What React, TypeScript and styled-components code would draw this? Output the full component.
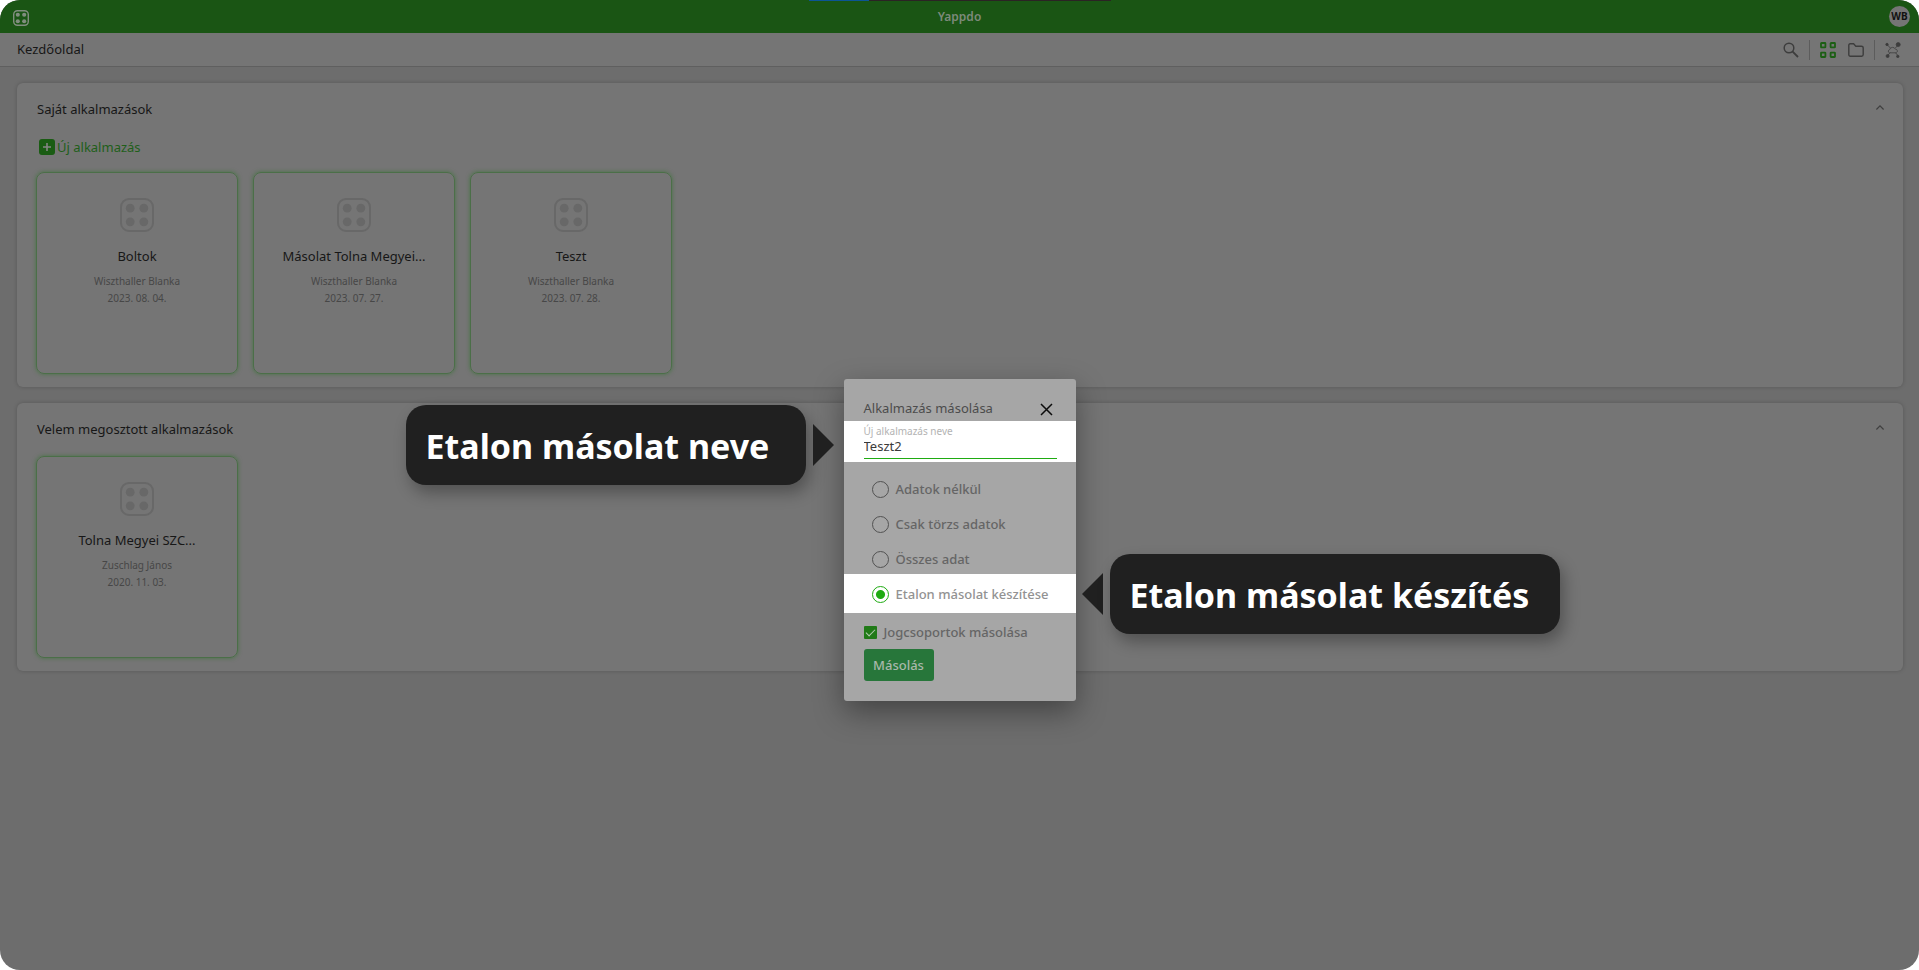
import React from 'react';
import styled, { createGlobalStyle } from 'styled-components';

const GlobalStyle = createGlobalStyle`
  *, *::before, *::after { box-sizing: border-box; }
  body { margin: 0; background: #fff; }
  body, button, input { font-family: "Noto Sans", "Open Sans", sans-serif; font-size: 13px; }
  h1, h2, h3, p, ul { margin: 0; padding: 0; font-weight: 400; font-size: 13px; }
  button { border: 0; padding: 0; background: none; cursor: pointer; }
  svg { display: block; }
`;

const Page = styled.div`
  position: relative;
  min-height: 100vh;
  overflow: hidden;
  border-radius: 20px;
  background: #6d6d6d;
  color: #171717;
`;

const LoadBar = styled.div`
  position: absolute;
  top: 0;
  left: calc(50% - 151px);
  width: 302px;
  height: 1px;
  background: #2b2324;
`;

const LoadValue = styled.div`
  width: 20%;
  height: 1px;
  background: #0c5596;
`;

const TopBar = styled.header`
  display: grid;
  grid-template-columns: 1fr auto 1fr;
  align-items: center;
  height: 33px;
  padding: 0 9px;
  background: #1a5514;
`;

const Brand = styled.h1`
  font-size: 12px;
  font-weight: 600;
  line-height: 20px;
  color: #7d8a7b;
`;

const HomeButton = styled.button`
  justify-self: start;
  padding: 2px 0 0 4px;
  color: #808d7e;
`;

const Avatar = styled.button`
  justify-self: end;
  width: 21px;
  height: 21px;
  border-radius: 50%;
  background: #757575;
  color: #111;
  font-size: 10px;
  font-weight: 700;
  line-height: 21px;
  text-align: center;
`;

const SubBar = styled.div`
  display: flex;
  align-items: center;
  justify-content: space-between;
  height: 34px;
  padding: 0 18px 0 17px;
  border-bottom: 1px solid #5f5f5f;
  background: #757575;
`;

const Crumb = styled.span`
  padding-bottom: 2px;
`;

const Tools = styled.div`
  display: flex;
  align-items: center;
  gap: 12px;
`;

const ToolButton = styled.button<{ $active?: boolean }>`
  color: ${p => (p.$active ? '#1c5f14' : '#3d3d3d')};
`;

const Divider = styled.span`
  width: 1px;
  height: 20px;
  margin: 0 -2px;
  background: #5c5c5c;
`;

const Content = styled.main`
  display: flex;
  flex-direction: column;
  gap: 16px;
  padding: 16px 16px 16px 17px;
`;

const Panel = styled.section`
  padding: 17px 19px 13px;
  border-radius: 6px;
  background: #757575;
  box-shadow: 0 0 4px rgba(0, 0, 0, 0.2);
`;

const PanelHead = styled.div`
  display: flex;
  align-items: flex-start;
  justify-content: space-between;
  height: 20px;
  margin-bottom: 16px;
`;

const PanelTitle = styled.h2`
  padding-left: 1px;
  line-height: 18px;
`;

const Collapse = styled.button`
  padding: 5px 0;
  color: #3f3f3f;
`;

const NewApp = styled.button`
  display: flex;
  align-items: center;
  gap: 2px;
  height: 22px;
  margin: 0 0 14px 3px;
  line-height: 18px;
  color: #1f5f1a;
`;

const Cards = styled.ul`
  display: flex;
  flex-wrap: wrap;
  gap: 15px;
  list-style: none;
`;

const Card = styled.li`
  display: flex;
  flex-direction: column;
  align-items: center;
  width: 202px;
  height: 202px;
  padding-top: 25px;
  border: 1px solid #4b6f48;
  border-radius: 8px;
  box-shadow: 0 0 4px rgba(40, 115, 35, 0.6);
  color: #686868;
`;

const CardTitle = styled.h3`
  margin: 15px 0 8px;
  line-height: 18px;
  color: #171717;
`;

const CardMeta = styled.p`
  font-size: 10px;
  line-height: 17px;
  color: #474747;
`;

const Dialog = styled.form`
  position: absolute;
  top: 379px;
  left: calc(50% - 115px);
  width: 232px;
  margin-left: -1px;
  border-radius: 3px;
  background: #a6a6a6;
  box-shadow: 0 11px 30px rgba(0, 0, 0, 0.38);
`;

const DialogHead = styled.div`
  display: flex;
  align-items: flex-end;
  justify-content: space-between;
  height: 42px;
  padding: 0 23px 0 20px;
  color: #4c4c4c;
`;

const DialogTitle = styled.h2`
  padding-bottom: 4px;
  line-height: 18px;
`;

const CloseButton = styled.button`
  padding-bottom: 5px;
  color: #0c0c0c;
`;

const NameBand = styled.div`
  position: relative;
  height: 41px;
  padding: 3px 19px 0 20px;
  background: #fff;
`;

const NameLabel = styled.label`
  display: block;
  font-size: 10px;
  line-height: 14px;
  color: #b3b3b3;
`;

const NameInput = styled.input`
  display: block;
  width: 100%;
  height: 21px;
  padding: 0 0 4px;
  border: 0;
  border-bottom: 1px solid #1fab12;
  outline: 0;
  background: none;
  color: #3a3a3a;
`;

const Options = styled.div`
  display: flex;
  flex-direction: column;
  gap: 18px;
  padding: 19px 28px 6px;
`;

const SelectedBand = styled.div`
  position: relative;
  padding: 12px 0 10px 28px;
  background: #fff;
`;

const Option = styled.label<{ $light?: boolean }>`
  display: flex;
  align-items: center;
  gap: 7px;
  height: 17px;
  font-weight: 500;
  white-space: nowrap;
  color: ${p => (p.$light ? '#929292' : '#656565')};
`;

const OptionText = styled.span`
  padding-bottom: 1px;
  line-height: 16px;
`;

const Radio = styled.input`
  appearance: none;
  width: 17px;
  height: 17px;
  margin: 0;
  border: 1px solid #525252;
  border-radius: 50%;

  &:checked {
    border-color: #1fab12;
    background: radial-gradient(circle, #1fab12 4px, transparent 5px);
  }
`;

const DialogFoot = styled.div`
  display: flex;
  flex-direction: column;
  align-items: flex-start;
  gap: 10px;
  padding: 13px 20px 20px;
`;

const CheckOption = styled.label`
  display: flex;
  align-items: center;
  gap: 7px;
  height: 13px;
  font-weight: 500;
  color: #656565;
`;

const Check = styled.input`
  appearance: none;
  display: grid;
  place-items: center;
  width: 13px;
  height: 13px;
  margin: 0;
  border-radius: 1px;
  background: #207a17;

  &:checked::after {
    content: "";
    width: 9px;
    height: 5px;
    margin-bottom: 3px;
    border: solid #b4ccb1;
    border-width: 0 0 1px 1px;
    transform: rotate(-45deg);
  }
`;

const CopyButton = styled.button`
  width: 70px;
  height: 32px;
  border-radius: 3px;
  background: #27763a;
  color: #a9b8ab;
  font-weight: 500;
`;

const Callout = styled.aside<{ $side: 'left' | 'right' }>`
  position: absolute;
  display: flex;
  flex-direction: ${p => (p.$side === 'left' ? 'row' : 'row-reverse')};
  align-items: center;
  gap: 7px;
  ${p => (p.$side === 'left' ? 'right: calc(100% + 10px); top: -16px;' : 'left: calc(100% + 6px); top: -20px;')}
`;

const Bubble = styled.p<{ $wide?: boolean }>`
  width: ${p => (p.$wide ? 450 : 400)}px;
  height: 80px;
  padding: 2px 0 0 20px;
  border-radius: 20px;
  background: #202020;
  box-shadow: 4px 8px 16px rgba(0, 0, 0, 0.3);
  color: #fff;
  font-size: 34px;
  font-weight: 700;
  line-height: 78px;
  white-space: nowrap;
`;

const AppIcon = ({ size, stroke }: { size: number; stroke: number }) => (
  <svg width={size} height={size} viewBox="0 0 34 34" fill="currentColor" aria-hidden="true">
    <rect x={stroke / 2} y={stroke / 2} width={34 - stroke} height={34 - stroke} rx="8" fill="none" stroke="currentColor" strokeWidth={stroke} />
    {[10.2, 23.8].map(x => [10.2, 23.8].map(y => <circle key={`${x}-${y}`} cx={x} cy={y} r="4.4" />))}
  </svg>
);

const Chevron = () => (
  <svg width="8" height="5" viewBox="0 0 8 5" fill="none" stroke="currentColor" strokeWidth="1.2" aria-hidden="true">
    <path d="M.4 4.5 4 .9l3.6 3.6" />
  </svg>
);

const Pointer = ({ side }: { side: 'left' | 'right' }) => (
  <svg width="21" height="42" viewBox="0 0 21 42" fill="#202020" aria-hidden="true">
    <path d={side === 'left' ? 'M0 0 21 21 0 42Z' : 'M21 0 0 21l21 21Z'} />
  </svg>
);

type AppInfo = { name: string; owner: string; date: string };

const ownApps: AppInfo[] = [
  { name: 'Boltok', owner: 'Wiszthaller Blanka', date: '2023. 08. 04.' },
  { name: 'Másolat Tolna Megyei...', owner: 'Wiszthaller Blanka', date: '2023. 07. 27.' },
  { name: 'Teszt', owner: 'Wiszthaller Blanka', date: '2023. 07. 28.' },
];

const sharedApps: AppInfo[] = [{ name: 'Tolna Megyei SZC...', owner: 'Zuschlag János', date: '2020. 11. 03.' }];

const copyModes = ['Adatok nélkül', 'Csak törzs adatok', 'Összes adat'];

const AppPanel = ({ title, apps, children }: { title: string; apps: AppInfo[]; children?: React.ReactNode }) => (
  <Panel>
    <PanelHead>
      <PanelTitle>{title}</PanelTitle>
      <Collapse type="button" aria-label="Összecsukás"><Chevron /></Collapse>
    </PanelHead>
    {children}
    <Cards>
      {apps.map(app => (
        <Card key={app.name}>
          <AppIcon size={34} stroke={2} />
          <CardTitle>{app.name}</CardTitle>
          <CardMeta>{app.owner}</CardMeta>
          <CardMeta>{app.date}</CardMeta>
        </Card>
      ))}
    </Cards>
  </Panel>
);

export default function App() {
  return (
    <Page>
      <GlobalStyle />
      <TopBar>
        <HomeButton type="button" aria-label="Alkalmazások"><AppIcon size={16} stroke={3} /></HomeButton>
        <Brand>Yappdo</Brand>
        <Avatar type="button">WB</Avatar>
      </TopBar>
      <LoadBar><LoadValue /></LoadBar>
      <SubBar>
        <Crumb>Kezdőoldal</Crumb>
        <Tools>
          <ToolButton type="button" aria-label="Keresés">
            <svg width="16" height="16" viewBox="0 0 16 16" fill="none" stroke="currentColor" strokeWidth="1.5">
              <circle cx="6" cy="6" r="4.8" />
              <path d="m9.4 9.4 5.6 5.6" strokeWidth="1.8" />
            </svg>
          </ToolButton>
          <Divider />
          <ToolButton type="button" $active aria-label="Rács nézet">
            <svg width="16" height="16" viewBox="0 0 16 16" fill="none" stroke="currentColor" strokeWidth="1.8">
              <rect x="1" y="1" width="4.4" height="4.4" rx=".5" />
              <rect x="10.6" y="1" width="4.4" height="4.4" rx=".5" />
              <rect x="1" y="10.6" width="4.4" height="4.4" rx=".5" />
              <rect x="10.6" y="10.6" width="4.4" height="4.4" rx=".5" />
            </svg>
          </ToolButton>
          <ToolButton type="button" aria-label="Mappa nézet">
            <svg width="16" height="16" viewBox="0 0 16 16" fill="none" stroke="currentColor" strokeWidth="1.4" strokeLinejoin="round">
              <path d="M.8 3.200c0-.9.5-1.400 1.400-1.400h3.400l2.200 2.400h5.600c1.200 0 1.800.6 1.800 1.600v6.800c0 1-.6 1.600-1.600 1.600H2.400c-1 0-1.600-.6-1.600-1.600z" />
            </svg>
          </ToolButton>
          <Divider />
          <ToolButton type="button" aria-label="Kapcsolatok">
            <svg width="16" height="16" viewBox="0 0 16 16" fill="currentColor" stroke="currentColor" strokeWidth=".8">
              <path d="M2 2.500 5.400 6M13 3l-2.600 3M2.600 13.600l2.600-3M13 13.800l-2.400-3" />
              <circle cx="2" cy="2.500" r="1.200" />
              <circle cx="13.200" cy="2.600" r="2" />
              <circle cx="2.600" cy="14" r="1.500" />
              <circle cx="12.800" cy="14.400" r="1.200" />
              <path fill="none" d="M4.400 10.800a1.700 1.700 0 0 1 .2-3.200 3.100 3.100 0 0 1 5.800-.4 1.900 1.900 0 0 1 .9 3.600z" />
            </svg>
          </ToolButton>
        </Tools>
      </SubBar>
      <Content>
        <AppPanel title="Saját alkalmazások" apps={ownApps}>
          <NewApp type="button">
            <svg width="16" height="16" viewBox="0 0 16 16" aria-hidden="true">
              <rect width="16" height="16" rx="3" fill="#1a5c13" />
              <path d="M8 4v8M4 8h8" stroke="#858585" strokeWidth="1.6" />
            </svg>
            <OptionText>Új alkalmazás</OptionText>
          </NewApp>
        </AppPanel>
        <AppPanel title="Velem megosztott alkalmazások" apps={sharedApps} />
      </Content>
      <Dialog role="dialog" aria-labelledby="dialog-title" onSubmit={e => e.preventDefault()}>
        <DialogHead>
          <DialogTitle id="dialog-title">Alkalmazás másolása</DialogTitle>
          <CloseButton type="button" aria-label="Bezárás">
            <svg width="13" height="13" viewBox="0 0 13 13" fill="none" stroke="currentColor" strokeWidth="1.5">
              <path d="m1 1 11 11M12 1 1 12" />
            </svg>
          </CloseButton>
        </DialogHead>
        <NameBand>
          <NameLabel htmlFor="app-name">Új alkalmazás neve</NameLabel>
          <NameInput id="app-name" type="text" defaultValue="Teszt2" />
          <Callout $side="left">
            <Bubble>Etalon másolat neve</Bubble>
            <Pointer side="left" />
          </Callout>
        </NameBand>
        <Options>
          {copyModes.map(mode => (
            <Option key={mode}>
              <Radio type="radio" name="mode" />
              <OptionText>{mode}</OptionText>
            </Option>
          ))}
        </Options>
        <SelectedBand>
          <Option $light>
            <Radio type="radio" name="mode" defaultChecked />
            <OptionText>Etalon másolat készítése</OptionText>
          </Option>
          <Callout $side="right">
            <Bubble $wide>Etalon másolat készítés</Bubble>
            <Pointer side="right" />
          </Callout>
        </SelectedBand>
        <DialogFoot>
          <CheckOption>
            <Check type="checkbox" defaultChecked />
            <OptionText>Jogcsoportok másolása</OptionText>
          </CheckOption>
          <CopyButton type="submit">Másolás</CopyButton>
        </DialogFoot>
      </Dialog>
    </Page>
  );
}
